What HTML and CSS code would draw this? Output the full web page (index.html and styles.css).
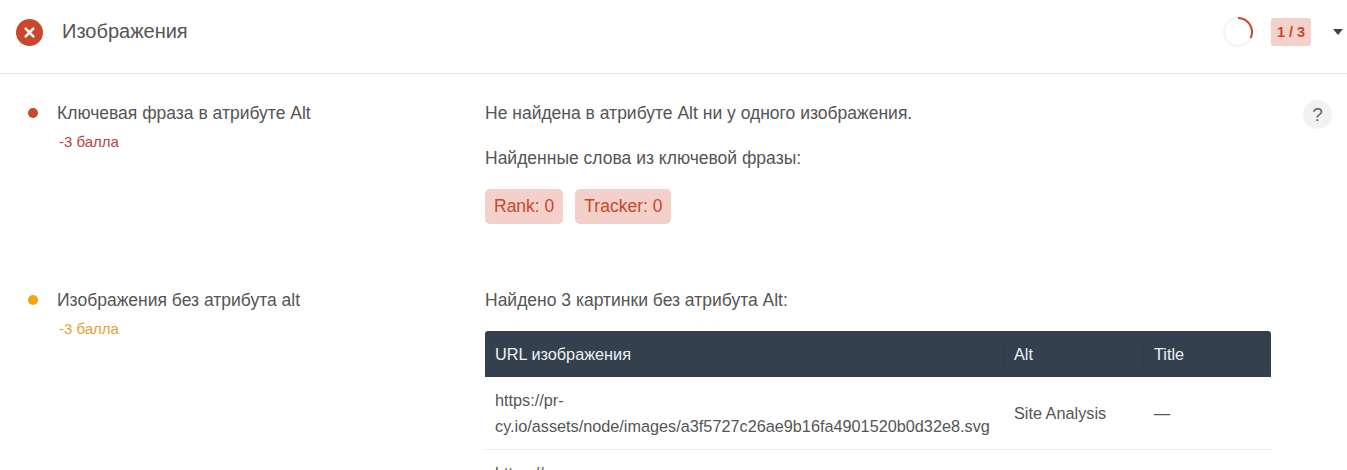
FILE: index.html
```html
<!DOCTYPE html>
<html lang="ru">
<head>
<meta charset="utf-8">
<title>Изображения</title>
<link rel="stylesheet" href="styles.css">
</head>
<body>
<header class="head">
  <span class="status-icon">
    <svg width="27" height="27" viewBox="0 0 27 27"><circle cx="13.5" cy="13.5" r="13.5" fill="#c9472c"/><path d="M9.7 9.7l7.6 7.6M17.3 9.7l-7.6 7.6" stroke="#fff" stroke-width="2.6" stroke-linecap="round" fill="none"/></svg>
  </span>
  <h2 class="title">Изображения</h2>
  <svg class="ring" width="30" height="30" viewBox="0 0 30 30"><circle cx="15" cy="15" r="14" fill="none" stroke="#f3f3f3" stroke-width="2"/><path d="M15 1A14 14 0 0 1 27.6 21" fill="none" stroke="#c9472c" stroke-width="2"/></svg>
  <span class="score">1 / 3</span>
  <span class="caret"></span>
</header>
<section class="row">
  <div class="label">
    <span class="dot dot-red"></span>
    <div>
      <div class="name">Ключевая фраза в атрибуте Alt</div>
      <div class="pts pts-red">-3 балла</div>
    </div>
  </div>
  <div class="body">
    <p class="text">Не найдена в атрибуте Alt ни у одного изображения.</p>
    <p class="text">Найденные слова из ключевой фразы:</p>
    <div class="tags"><span class="tag">Rank: 0</span><span class="tag">Tracker: 0</span></div>
  </div>
  <span class="help">?</span>
</section>
<section class="row">
  <div class="label">
    <span class="dot dot-amber"></span>
    <div>
      <div class="name">Изображения без атрибута alt</div>
      <div class="pts pts-amber">-3 балла</div>
    </div>
  </div>
  <div class="body">
    <p class="text">Найдено 3 картинки без атрибута Alt:</p>
    <table class="table">
      <thead><tr><th class="c-url">URL изображения</th><th class="c-alt">Alt</th><th class="c-title">Title</th></tr></thead>
      <tbody>
        <tr><td>https://pr-cy.io/assets/node/images/a3f5727c26ae9b16fa4901520b0d32e8.svg</td><td>Site Analysis</td><td>—</td></tr>
        <tr><td>https://pr-cy.io/assets/node/images/b81c4d07e2f9a6135dc0478ea1f2963b.svg</td><td>Site Analysis</td><td>—</td></tr>
      </tbody>
    </table>
  </div>
</section>
</body>
</html>
```
FILE: styles.css
```css
html, body { margin: 0; padding: 0; height: 470px; overflow: hidden; background: #fff; }
body { font-family: "Liberation Sans", Arial, sans-serif; color: #555; }
.head { display: flex; align-items: center; height: 64px; border-bottom: 1px solid #e6e6e6; padding: 0 4px 9px 16px; }
.status-icon { display: flex; width: 27px; height: 27px; }
.title { flex: 1; margin: 0 0 0 19px; font-size: 20px; font-weight: 400; color: #555; line-height: 28px; position: relative; top: -1px; }
.ring { margin-right: 18px; }
.score { width: 40px; height: 28px; line-height: 28px; text-align: center; background: #f3d0ca; color: #c9472c; border-radius: 3px; font-size: 14.5px; font-weight: 700; margin-right: 22px; }
.caret { width: 0; height: 0; border-left: 5.5px solid transparent; border-right: 5.5px solid transparent; border-top: 6px solid #444; margin-right: 0; }
.row { display: flex; position: relative; padding: 27px 0 0 28px; }
.row + .row { padding-top: 64px; }
.label { display: flex; width: 457px; flex: none; }
.dot { width: 10px; height: 10px; border-radius: 50%; margin: 7px 19px 0 0; flex: none; }
.dot-red { background: #c9472c; }
.dot-amber { background: #f8a20e; }
.name { font-size: 17.5px; line-height: 24px; }
.pts { font-size: 15px; line-height: 20px; margin: 7px 0 0 2px; }
.pts-red { color: #b9443a; }
.pts-amber { color: #e8a033; }
.body { width: 786px; flex: none; }
.text { margin: 0 0 21px; font-size: 17.5px; line-height: 24px; }
.tags { display: flex; gap: 12px; margin-top: -2px; }
.tag { height: 35px; line-height: 35px; padding: 0 9px; border-radius: 5px; background: #f3d0ca; color: #c9472c; font-size: 17.5px; }
.help { position: absolute; top: 26px; right: 15px; width: 29px; height: 29px; line-height: 29px; border-radius: 50%; background: #f2f2f2; text-align: center; font-size: 19px; color: #666; }
.table { width: 786px; border-collapse: collapse; table-layout: fixed; font-size: 16.25px; margin-top: -2px; }
.table th { background: #35404f; color: #eef0f2; font-weight: 400; text-align: left; height: 46px; padding: 0 10px; box-sizing: border-box; position: relative; }
.table th:first-child { border-top-left-radius: 3px; }
.table th:last-child { border-top-right-radius: 3px; }
.c-alt::before, .c-title::before { content: ""; position: absolute; left: -1px; top: 11px; bottom: 10px; width: 1px; background: #303a48; }
.c-url { width: 519px; }
.c-alt { width: 140px; }
.table td { padding: 10px; line-height: 26px; border-bottom: 1px solid #ececec; color: #555; }
```
